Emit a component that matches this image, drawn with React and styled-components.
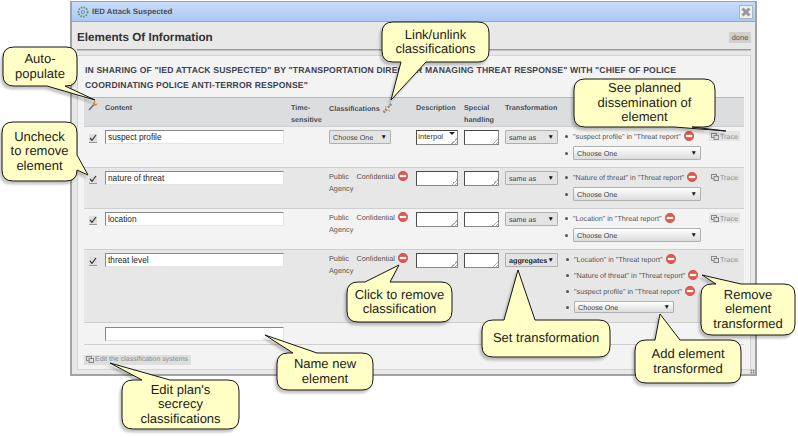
import React from "react";
import styled, { createGlobalStyle } from "styled-components";

const GlobalStyle = createGlobalStyle`
  html, body { margin: 0; padding: 0; background: #fff; }
  body { font-family: "Liberation Sans", Arial, sans-serif; text-rendering: geometricPrecision; }
`;

const COLUMNS = "21px 186px 38px 87px 48px 41px 57px 146px 35px";

// rounded box with one tail, tail = { side, a, b, x, y } (a/b along the side, x/y = tip)
const bubblePath = (w, h, r, t) => {
  const p = [`M${r} 0`];
  if (t.side === "top") p.push(`L${t.a} 0 L${t.x} ${t.y} L${t.b} 0`);
  p.push(`L${w - r} 0 Q${w} 0 ${w} ${r}`);
  if (t.side === "right") p.push(`L${w} ${t.a} L${t.x} ${t.y} L${w} ${t.b}`);
  p.push(`L${w} ${h - r} Q${w} ${h} ${w - r} ${h}`);
  if (t.side === "bottom") p.push(`L${t.b} ${h} L${t.x} ${t.y} L${t.a} ${h}`);
  p.push(`L${r} ${h} Q0 ${h} 0 ${h - r}`);
  if (t.side === "left") p.push(`L0 ${t.b} L${t.x} ${t.y} L0 ${t.a}`);
  p.push(`L0 ${r} Q0 0 ${r} 0 Z`);
  return p.join(" ");
};

const Callout = ({ x, y, w, h, tail, children }) => (
  <Bubble $x={x} $y={y} $w={w} $h={h}>
    <BubbleShape width={w} height={h}>
      <path d={bubblePath(w, h, 11, tail)} fill="#ffffc6" stroke="#141414" strokeWidth="1" />
    </BubbleShape>
    <BubbleText>{children}</BubbleText>
  </Bubble>
);

const RemoveIcon = () => (
  <RemoveSvg viewBox="0 0 10 10" width="10" height="10">
    <circle cx="5" cy="5" r="4.7" fill="#e0594c" stroke="#c0392f" strokeWidth=".6" />
    <rect x="1.8" y="3.9" width="6.4" height="2.2" fill="#fff" />
  </RemoveSvg>
);

const CheckBox = () => (
  <CheckWrap>
    <svg viewBox="0 0 8 8" width="8" height="8">
      <path d="M1 4 L3 6.3 L7 1" fill="none" stroke="#333" strokeWidth="1.2" />
    </svg>
  </CheckWrap>
);

const Pages = () => (
  <svg viewBox="0 0 8 7" width="8" height="7">
    <rect x=".5" y=".5" width="5" height="4" fill="none" stroke="#888" />
    <rect x="3" y="2.5" width="4.5" height="4" fill="#ddd" stroke="#888" />
  </svg>
);

const TraceBtn = () => (
  <Trace>
    <Pages />
    Trace
  </Trace>
);

const Dissemination = ({ items, wide = true }) => (
  <DissList $indent={wide ? 0 : 1}>
    {items.map((item) => (
      <DissItem key={item}>
        <Dot />
        {item}
        <RemoveIcon />
      </DissItem>
    ))}
    <DissItem>
      <Dot />
      <Select $w={wide ? 128 : 100} $h={wide ? 14 : 12} $glossy>
        Choose One
        <Arrow>▼</Arrow>
      </Select>
    </DissItem>
  </DissList>
);

const ClassCell = () => (
  <ClassText>
    <span>Public</span>
    <Conf>
      Confidential
      <RemoveIcon />
    </Conf>
    <div>Agency</div>
  </ClassText>
);

const ROWS = [
  { name: "suspect profile", desc: "Interpol", transform: "same as", items: ['"suspect profile" in "Threat report"'] },
  { name: "nature of threat", classified: true, transform: "same as", items: ['"Nature of threat" in "Threat report"'] },
  { name: "location", classified: true, transform: "same as", items: ['"Location" in "Threat report"'] },
  {
    name: "threat level",
    classified: true,
    transform: "aggregates",
    tall: true,
    items: ['"Location" in "Threat report"', '"Nature of threat" in "Threat report"', '"suspect profile" in "Threat report"'],
  },
];

export default function App() {
  return (
    <Page>
      <GlobalStyle />
      <Window>
        <TitleBar>
          <svg viewBox="0 0 12 12" width="12" height="12">
            <circle cx="6" cy="6" r="4.6" fill="none" stroke="#5d9a6a" strokeWidth="1.8" strokeDasharray="1.6 1.1" />
            <circle cx="6" cy="6" r="2.1" fill="#6d8fc4" />
            <circle cx="6" cy="6" r=".9" fill="#cfe3d2" />
          </svg>
          <TitleText>IED Attack Suspected</TitleText>
          <CloseBtn>
            <svg viewBox="0 0 10 10" width="10" height="10">
              <path d="M1.5 1.5 L8.5 8.5 M8.5 1.5 L1.5 8.5" stroke="#999" strokeWidth="3" />
            </svg>
          </CloseBtn>
        </TitleBar>
        <SubHeader>
          <Heading>Elements Of Information</Heading>
          <Done>done</Done>
        </SubHeader>
        <Panel>
          <Intro>
            <IntroLine>In sharing of "IED Attack Suspected" by "Transportation Director managing threat response" with "Chief of Police</IntroLine>
            <IntroLine>coordinating police anti-terror response"</IntroLine>
          </Intro>
          <HeadRow>
            <WrenchIcon viewBox="0 0 10 11" width="10" height="11">
              <path d="M1 10 L6 4.5" stroke="#777" strokeWidth="1.8" />
              <path d="M5 4 Q5 1 8 1 L6.8 3 L8 4.2 L9.6 2.8 Q9.6 6 6.2 5.6 Z" fill="#e08a22" />
            </WrenchIcon>
            <HeadCell>Content</HeadCell>
            <HeadCell>Time-sensitive</HeadCell>
            <HeadCell>
              Classifications
              <LinkIcon viewBox="0 0 11 12" width="11" height="12">
                <path d="M1.5 10.5 L5 7 M6 5.5 L9.5 1.5" stroke="#8a8a8a" strokeWidth="2.6" strokeDasharray="2 .8" />
                <path d="M3 4.5 L4.5 6 M6.5 8 L8 9.5" stroke="#e0a050" strokeWidth="1.1" />
              </LinkIcon>
            </HeadCell>
            <HeadCell>Description</HeadCell>
            <HeadCell>Special handling</HeadCell>
            <HeadCell>Transformation</HeadCell>
          </HeadRow>
          {ROWS.map((row, i) => (
            <Row key={row.name} $alt={i % 2 === 1} $tall={row.tall}>
              <CheckBox />
              <TextInput defaultValue={row.name} />
              <span />
              {row.classified ? (
                <ClassCell />
              ) : (
                <Select $w={62} $h={14}>
                  Choose One
                  <Arrow>▼</Arrow>
                </Select>
              )}
              <NoteWrap>
                <Note $w={42} defaultValue={row.desc || ""} />
                {row.desc && <NoteMark />}
              </NoteWrap>
              <Note $w={35} defaultValue="" />
              <Select $w={53} $h={14} $strong={row.tall}>
                {row.transform}
                <Arrow>▼</Arrow>
              </Select>
              <Dissemination items={row.items} wide={!row.tall} />
              <TraceBtn />
            </Row>
          ))}
          <NewRow>
            <span />
            <TextInput defaultValue="" />
          </NewRow>
          <Footer>
            <EditBtn>
              <Pages />
              Edit the classification systems
            </EditBtn>
          </Footer>
        </Panel>
        <Grip />
      </Window>

      <Callout x={3} y={47} w={74} h={39} tail={{ side: "bottom", a: 44, b: 62, x: 92, y: 53 }}>
        {"Auto-\npopulate"}
      </Callout>
      <Callout x={2} y={122} w={75} h={59} tail={{ side: "right", a: 33, b: 48, x: 86, y: 53 }}>
        {"Uncheck\nto remove\nelement"}
      </Callout>
      <Callout x={382} y={22} w={107} h={40} tail={{ side: "bottom", a: 19, b: 44, x: 9, y: 78 }}>
        {"Link/unlink\nclassifications"}
      </Callout>
      <Callout x={574} y={79} w={141} h={48} tail={{ side: "bottom", a: 100, b: 118, x: 152, y: 52 }}>
        {"See planned\ndissemination of\nelement"}
      </Callout>
      <Callout x={347} y={282} w={105} h={40} tail={{ side: "top", a: 18, b: 43, x: 52, y: -17 }}>
        {"Click to remove\nclassification"}
      </Callout>
      <Callout x={482} y={320} w={128} h={37} tail={{ side: "top", a: 22, b: 53, x: 36, y: -50 }}>
        Set transformation
      </Callout>
      <Callout x={701} y={284} w={94} h={51} tail={{ side: "top", a: 15, b: 40, x: 1, y: -9 }}>
        {"Remove\nelement\ntransformed"}
      </Callout>
      <Callout x={635} y={340} w={106} h={43} tail={{ side: "top", a: 20, b: 45, x: 25, y: -26 }}>
        {"Add element\ntransformed"}
      </Callout>
      <Callout x={277} y={353} w={96} h={37} tail={{ side: "top", a: 16, b: 40, x: -12, y: -18 }}>
        {"Name new\nelement"}
      </Callout>
      <Callout x={122} y={380} w={117} h={49} tail={{ side: "top", a: 20, b: 48, x: -12, y: -17 }}>
        {"Edit plan's\nsecrecy\nclassifications"}
      </Callout>
    </Page>
  );
}

const Page = styled.div`
  position: relative;
  width: 798px;
  height: 437px;
  overflow: hidden;
  padding: 1px 0 0 70px;
  box-sizing: border-box;
  background: #fff;
`;

const Window = styled.div`
  position: relative;
  width: 687px;
  height: 375px;
  box-sizing: border-box;
  border: 2px solid #a2a2a2;
  border-width: 1px 2px 2px 2px;
  background: #e8e8e8;
`;

const TitleBar = styled.div`
  display: flex;
  align-items: center;
  height: 20px;
  box-sizing: border-box;
  padding: 0 2px 0 5px;
  gap: 3px;
  background: linear-gradient(#c8dcf8, #abc9f4);
  border-bottom: 1px solid #9aa6b6;
`;

const TitleText = styled.div`
  flex: 1;
  font-size: 7.8px;
  font-weight: bold;
  color: #4a4f58;
`;

const CloseBtn = styled.div`
  width: 14px;
  height: 14px;
  box-sizing: border-box;
  display: flex;
  align-items: center;
  justify-content: center;
  background: #eef0f2;
  border: 1px solid #b0b4b8;
`;

const SubHeader = styled.div`
  display: flex;
  align-items: center;
  justify-content: space-between;
  height: 28px;
  box-sizing: border-box;
  padding-top: 4px;
  margin: 0 4px 0 5px;
  border-bottom: 1px solid #9a9a9a;
  box-shadow: 0 1px 0 #c4c4c4;
`;

const Heading = styled.div`
  font-size: 11.7px;
  font-weight: bold;
  color: #333;
`;

const Done = styled.div`
  width: 22px;
  height: 11px;
  line-height: 11px;
  text-align: center;
  font-size: 7.5px;
  color: #555;
  background: #cfcfcf;
`;

const Panel = styled.div`
  width: 674px;
  height: 315px;
  margin: 5px 0 0 5px;
  padding: 7px 6px 0;
  box-sizing: border-box;
  background: #f3f3f3;
  border: 1px solid #d4d4d4;
`;

const Intro = styled.div`
  height: 34px;
  padding-left: 1px;
`;

const IntroLine = styled.div`
  width: fit-content;
  white-space: nowrap;
  font-size: 8.6px;
  line-height: 14.5px;
  font-weight: bold;
  text-transform: uppercase;
  letter-spacing: 0.155px;
  color: #3d4250;
`;

const gridRow = `
  display: grid;
  grid-template-columns: ${COLUMNS};
  align-items: start;
`;

const HeadRow = styled.div`
  ${gridRow}
  height: 29px;
  box-sizing: border-box;
  padding-top: 4px;
  background: #dcdddf;
  border-top: 1px solid #b8b8b8;
`;

const HeadCell = styled.div`
  font-size: 7.2px;
  line-height: 12px;
  font-weight: bold;
  color: #48505a;
  padding-right: 3px;
`;

const WrenchIcon = styled.svg`
  margin: -2px 0 0 4px;
`;

const LinkIcon = styled.svg`
  vertical-align: -3px;
  margin-left: 2px;
`;

const Row = styled.div`
  ${gridRow}
  height: ${(p) => (p.$tall ? 73 : 41)}px;
  box-sizing: border-box;
  padding-top: 3px;
  background: ${(p) => (p.$alt ? "#e7e7e7" : "#f3f3f3")};
  border-top: 1px solid #cfcfcf;
`;

const CheckWrap = styled.div`
  width: 8px;
  height: 8px;
  margin: 4px 0 0 5px;
  display: flex;
  background: #dedede;
  border-bottom: 1px solid #999;
`;

const TextInput = styled.input`
  width: 179px;
  height: 14px;
  box-sizing: border-box;
  padding: 0 2px;
  font-family: inherit;
  font-size: 8.3px;
  color: #222;
  background: #fff;
  border: 1px solid #e4e4e4;
  border-top: 1px solid #888;
  border-left: 1px solid #888;
  outline: none;
`;

const NoteWrap = styled.div`
  position: relative;
`;

const Note = styled.textarea`
  display: block;
  width: ${(p) => p.$w}px;
  height: 15px;
  box-sizing: border-box;
  padding: 1px;
  font-family: inherit;
  font-size: 7.5px;
  color: #333;
  background: linear-gradient(135deg, transparent 50%, #aaa 50%, #aaa 62%, transparent 62%, transparent 76%, #aaa 76%, #aaa 88%, transparent 88%) no-repeat right bottom / 6px 6px, #fff;
  border: 1px solid #4a4a4a;
  border-right-color: #888;
  border-bottom-color: #888;
  overflow: hidden;
  resize: none;
  outline: none;
`;

const NoteMark = styled.span`
  position: absolute;
  top: 2px;
  left: 33px;
  border: 2px solid transparent;
  border-top: 3px solid #222;
  border-left-width: 3px;
  border-right-width: 3px;
`;

const Select = styled.div`
  display: flex;
  align-items: center;
  justify-content: space-between;
  width: ${(p) => p.$w}px;
  height: ${(p) => p.$h}px;
  box-sizing: border-box;
  padding: 0 3px;
  font-size: 7.2px;
  color: ${(p) => (p.$strong ? "#222" : "#444")};
  font-weight: ${(p) => (p.$strong ? "bold" : "normal")};
  background: ${(p) => (p.$glossy ? "linear-gradient(#fff, #dcdcdc)" : "#e4e4e4")};
  border: 1px solid #b0b0b0;
  border-radius: 1px;
`;

const Arrow = styled.span`
  font-size: 6.5px;
  color: #111;
`;

const ClassText = styled.div`
  font-size: 7.3px;
  line-height: 12px;
  color: #555;
`;

const Conf = styled.span`
  margin-left: 7.5px;
`;

const RemoveSvg = styled.svg`
  vertical-align: -2px;
  margin-left: 3px;
`;

const DissList = styled.div`
  display: flex;
  flex-direction: column;
  gap: 4px;
  padding-left: ${(p) => p.$indent}px;
`;

const DissItem = styled.div`
  display: flex;
  align-items: center;
  min-height: 12px;
  font-size: 7.2px;
  color: #555;
`;

const Dot = styled.span`
  width: 3px;
  height: 3px;
  border-radius: 50%;
  background: #555;
  margin: 0 5px 0 3px;
  flex: none;
`;

const Trace = styled.div`
  display: flex;
  align-items: center;
  gap: 1px;
  width: 31px;
  height: 10px;
  margin: 1px 0 0 1px;
  box-sizing: border-box;
  padding-left: 2px;
  font-size: 7.2px;
  color: #909090;
  background: #e4e4e4;
`;

const NewRow = styled.div`
  ${gridRow}
  height: 22px;
  box-sizing: border-box;
  padding-top: 4px;
  border-top: 1px solid #cfcfcf;
`;

const Footer = styled.div`
  padding-top: 5px;
  border-top: 1px solid #cfcfcf;
`;

const EditBtn = styled.div`
  display: inline-flex;
  align-items: center;
  gap: 1px;
  height: 10px;
  padding: 0 3px 0 2px;
  font-size: 7px;
  color: #8a8a8a;
  background: #dedede;
`;

const Grip = styled.div`
  position: absolute;
  right: 0;
  bottom: 0;
  width: 5px;
  height: 5px;
  background: radial-gradient(circle, #666 45%, transparent 50%) 0 0 / 2.5px 2.5px;
`;

const Bubble = styled.div`
  position: absolute;
  left: ${(p) => p.$x}px;
  top: ${(p) => p.$y}px;
  width: ${(p) => p.$w}px;
  height: ${(p) => p.$h}px;
`;

const BubbleShape = styled.svg`
  position: absolute;
  inset: 0;
  overflow: visible;
  filter: drop-shadow(-2px 3px 1px rgba(0, 0, 0, 0.22));
`;

const BubbleText = styled.div`
  position: relative;
  height: 100%;
  display: flex;
  align-items: center;
  justify-content: center;
  text-align: center;
  white-space: pre-line;
  font-size: 13px;
  line-height: 14.5px;
  color: #1c1c1c;
`;
